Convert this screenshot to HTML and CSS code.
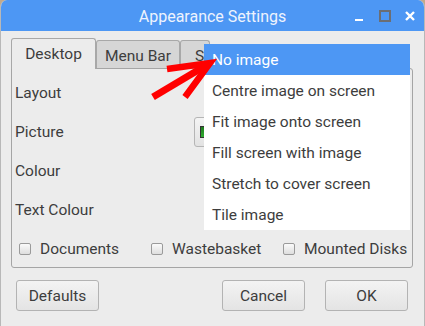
FILE: index.html
```html
<!DOCTYPE html>
<html>
<head>
<meta charset="utf-8">
<link rel="stylesheet" href="styles.css">
</head>
<body>
<div class="window">
  <div class="titlebar">
    <span></span>
    <span class="title">Appearance Settings</span>
    <span class="controls">
      <span class="min"></span>
      <span class="max"></span>
      <svg class="close" width="10" height="10" viewBox="0 0 10 10"><path d="M1 1L9 9M9 1L1 9" stroke="#fff" stroke-width="2.4"/></svg>
    </span>
  </div>
  <div class="content">
    <div class="tabs">
      <div class="tab active">Desktop</div>
      <div class="tab">Menu Bar</div>
      <div class="tab partial">S</div>
    </div>
    <div class="panel">
      <div class="row"><span class="label">Layout</span></div>
      <div class="row"><span class="label">Picture</span><span class="picbtn"><span class="pic"></span></span></div>
      <div class="row"><span class="label">Colour</span></div>
      <div class="row"><span class="label">Text Colour</span></div>
      <div class="checks">
        <label class="check"><span class="box"></span>Documents</label>
        <label class="check"><span class="box"></span>Wastebasket</label>
        <label class="check"><span class="box"></span>Mounted Disks</label>
      </div>
    </div>
    <div class="buttons">
      <button class="btn">Defaults</button>
      <span class="spacer"></span>
      <button class="btn">Cancel</button>
      <button class="btn">OK</button>
    </div>
  </div>
  <div class="menu">
    <div class="item selected">No image</div>
    <div class="item">Centre image on screen</div>
    <div class="item">Fit image onto screen</div>
    <div class="item">Fill screen with image</div>
    <div class="item">Stretch to cover screen</div>
    <div class="item">Tile image</div>
  </div>
  <svg class="arrow" width="425" height="326" viewBox="0 0 425 326">
    <path d="M153 97L205 66" stroke="#ff0000" stroke-width="7" stroke-linecap="butt" fill="none"/>
    <path d="M167 69L210 63L185 97" stroke="#ff0000" stroke-width="6.5" stroke-linejoin="miter" fill="none"/>
  </svg>
</div>
</body>
</html>
```
FILE: styles.css
```css
html, body {
  margin: 0;
  padding: 0;
}
body {
  width: 425px;
  height: 326px;
  background: #c2a98a;
  font-family: Roboto, "Noto Sans", sans-serif;
  font-size: 15.5px;
  color: #3d3d3d;
  overflow: hidden;
}
.window {
  position: relative;
  width: 425px;
  height: 326px;
  box-sizing: border-box;
  background: #ececec;
  border-left: 1px solid #b8b8b8;
  border-right: 1px solid #b8b8b8;
  border-radius: 7px 7px 0 0;
  overflow: hidden;
}
.titlebar {
  height: 31px;
  background: #4d97f4;
  display: grid;
  grid-template-columns: 1fr auto 1fr;
  align-items: center;
  color: #eef3fd;
  font-size: 16px;
}
.title {
  padding-top: 1px;
}
.controls {
  justify-self: end;
  display: flex;
  align-items: center;
  padding-right: 9px;
}
.min {
  width: 8px;
  height: 2px;
  background: #fff;
  margin-top: 8px;
  margin-right: 16px;
}
.max {
  width: 8px;
  height: 8px;
  border: 2px solid #6b6e74;
  margin-right: 14px;
}
.close {
  display: block;
}
.content {
  padding: 7px 11px 0 10px;
}
.tabs {
  display: flex;
  align-items: flex-end;
  height: 30px;
}
.tab {
  box-sizing: border-box;
  height: 28px;
  width: 84px;
  border: 1px solid #a8a8a8;
  border-bottom: none;
  border-radius: 3px 3px 0 0;
  background: #d6d6d6;
  display: flex;
  align-items: center;
  justify-content: center;
  padding-top: 2px;
}
.tab.partial {
  width: 30px;
  justify-content: flex-start;
  padding-left: 14px;
}
.tab.active {
  width: 85px;
  height: 31px;
  margin-bottom: -1px;
  background: #ececec;
  position: relative;
  z-index: 1;
  padding-top: 0;
}
.panel {
  box-sizing: border-box;
  height: 200px;
  border: 1px solid #a5a5a5;
  border-radius: 0 3px 3px 3px;
  padding: 4px 3px 0 3px;
}
.row {
  height: 39px;
  display: flex;
  align-items: center;
}
.label {
  width: 179px;
}
.picbtn {
  box-sizing: border-box;
  width: 60px;
  height: 30px;
  border: 1px solid #b5b5b5;
  border-radius: 3px;
  background: linear-gradient(#f4f4f4, #e2e2e2);
  display: flex;
  align-items: center;
  padding-left: 5px;
}
.pic {
  width: 5px;
  height: 10px;
  background: linear-gradient(#1f7a1f, #2fae2f);
  border: 1px solid #333;
}
.checks {
  height: 40px;
  display: grid;
  grid-template-columns: 132px 132px 1fr;
  align-items: center;
  padding-left: 4px;
}
.check {
  display: flex;
  align-items: center;
  gap: 9px;
}
.box {
  box-sizing: border-box;
  width: 12px;
  height: 12px;
  border: 1px solid #9a9a9a;
  border-radius: 2px;
  background: linear-gradient(#fafafa, #dedede);
}
.buttons {
  display: flex;
  gap: 20px;
  padding: 0 5px;
  margin-top: 12px;
}
.spacer {
  flex: 1;
}
.btn {
  box-sizing: border-box;
  width: 83px;
  height: 31px;
  border: 1px solid #b3b3b3;
  border-radius: 3px;
  background: linear-gradient(#f3f3f3, #e4e4e4);
  font-family: Roboto, "Noto Sans", sans-serif;
  font-size: 15.5px;
  color: #3d3d3d;
  padding: 0;
}
.menu {
  position: absolute;
  left: 203px;
  top: 44px;
  width: 206px;
  background: #ffffff;
}
.item {
  height: 31px;
  display: flex;
  align-items: center;
  padding-left: 8px;
}
.item.selected {
  background: #4d97f4;
  color: #ffffff;
}
.arrow {
  position: absolute;
  left: -1px;
  top: 0;
}
```
